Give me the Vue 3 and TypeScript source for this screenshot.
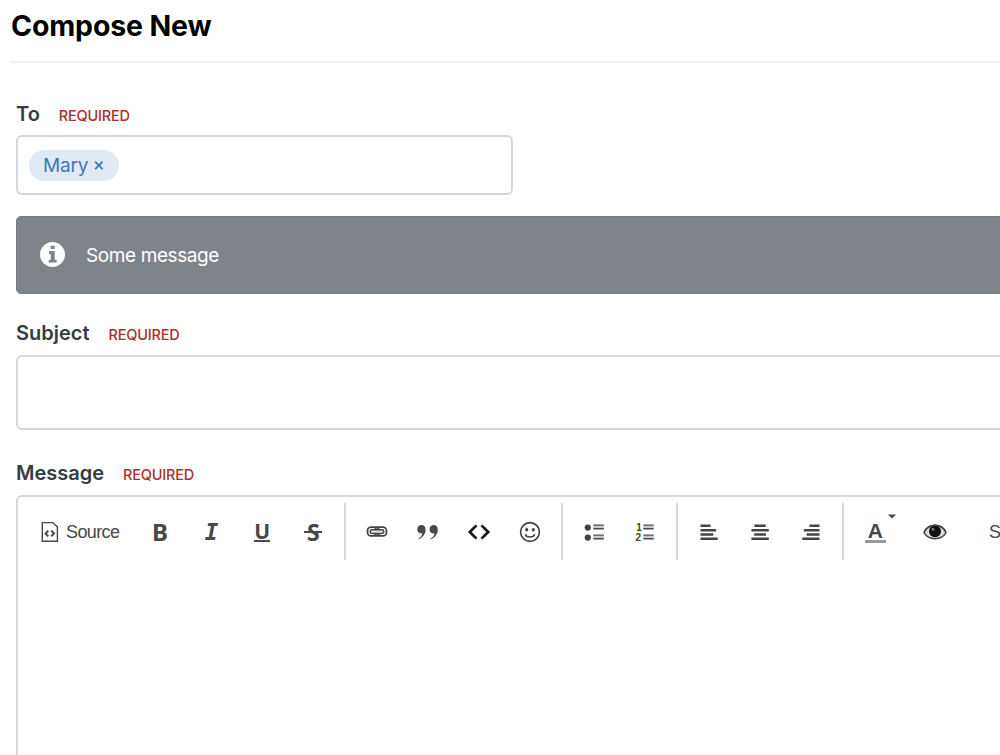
<script setup lang="ts">
interface Tool {
  id: string
  label: string
  glyph?: string
}

const groups: Tool[][] = [
  [
    { id: 'bold', label: 'Bold', glyph: 'B' },
    { id: 'italic', label: 'Italic', glyph: 'I' },
    { id: 'underline', label: 'Underline', glyph: 'U' },
    { id: 'strike', label: 'Strikethrough', glyph: 'S' },
  ],
  [
    { id: 'link', label: 'Link' },
    { id: 'quote', label: 'Block quote' },
    { id: 'code', label: 'Code' },
    { id: 'emoji', label: 'Emoji' },
  ],
  [
    { id: 'bullets', label: 'Bulleted list' },
    { id: 'numbers', label: 'Numbered list' },
  ],
  [
    { id: 'left', label: 'Align left' },
    { id: 'center', label: 'Align center' },
    { id: 'right', label: 'Align right' },
  ],
  [
    { id: 'color', label: 'Text color', glyph: 'A' },
    { id: 'preview', label: 'Preview' },
  ],
]
</script>

<template>
  <main class="page">
    <header class="head"><h1>Compose New</h1></header>
    <form class="form" @submit.prevent>
      <div class="label"><span class="name">To</span><span class="required">REQUIRED</span></div>
      <div class="recipients">
        <span class="chip">Mary
          <svg width="10" height="10" viewBox="0 0 10 10"><path d="M1.2 1.7 8.6 9.1M8.6 1.7 1.2 9.1" stroke="#3a78bd" stroke-width="1.8" /></svg>
        </span>
      </div>

      <div class="notice">
        <svg width="26" height="26" viewBox="0 0 26 26">
          <circle cx="12.5" cy="12.5" r="12.5" fill="#fff" />
          <path d="M10.7 3.7h4V7h-4zM9 9h5.7v8.7h1.9v2.9H8.7v-2.9h2v-5.6H9z" fill="#7f848a" />
        </svg>
        <span>Some message</span>
      </div>

      <div class="label subject-label"><span class="name">Subject</span><span class="required">REQUIRED</span></div>
      <div class="subject"></div>

      <div class="label message-label"><span class="name">Message</span><span class="required">REQUIRED</span></div>
      <div class="editor">
        <div class="toolbar">
          <div class="source">
            <svg width="18" height="22" viewBox="0 0 18 22" fill="none" stroke="#484848">
              <path d="M1.3 1.6h10.4l4.7 4.3v14.4H1.3z" stroke-width="1.4" />
              <path d="M7.3 9.6 4.6 12.5l2.7 2.9M10.3 9.6l2.7 2.9-2.7 2.9" stroke-width="2" />
            </svg>
            <span>Source</span>
          </div>
          <div v-for="(group, i) in groups" :key="i" class="group">
            <div v-for="tool in group" :key="tool.id" class="tool" :class="tool.id" :aria-label="tool.label">
              <span v-if="tool.glyph" class="glyph">{{ tool.glyph }}</span>
              <svg v-if="tool.id === 'color'" class="caret" width="8" height="5" viewBox="0 0 8 5"><path d="M0 .5h8L4 4.5z" fill="#484848" /></svg>
              <svg v-else-if="tool.id === 'link'" width="22" height="24" viewBox="0 0 22 24" fill="none">
                <rect x="1.5" y="7.1" width="11.7" height="8.8" rx="3.7" stroke="#444" stroke-width="1.8" />
                <rect x="8.8" y="7.1" width="11.7" height="8.8" rx="3.7" stroke="#444" stroke-width="1.8" />
                <rect x="4.2" y="9.7" width="13.6" height="3.7" rx="1.7" fill="#ddd" stroke="#444" stroke-width="1.5" />
              </svg>
              <svg v-else-if="tool.id === 'quote'" width="24" height="24" viewBox="0 0 24 24" fill="#484848">
                <path d="M5.5 5C8 5 9.6 6.7 9.6 9.5c0 4.7-3 8.3-7.1 9.8l-.3-.5c2.4-1.3 3.8-3 4.1-5.5-3 .7-5-1.2-5-4C1.3 6.8 3.1 5 5.5 5zM17.7 5c2.5 0 4.1 1.7 4.1 4.5 0 4.7-3 8.3-7.1 9.8l-.3-.5c2.4-1.3 3.8-3 4.1-5.5-3 .7-5-1.2-5-4 0-2.5 1.8-4.3 4.2-4.3z" />
              </svg>
              <svg v-else-if="tool.id === 'code'" width="24" height="24" viewBox="0 0 24 24" fill="none" stroke="#181818" stroke-width="2.7">
                <path d="M9.5 5.4 2.8 12l6.7 6.6M14.5 5.4l6.7 6.6-6.7 6.6" />
              </svg>
              <svg v-else-if="tool.id === 'emoji'" width="24" height="24" viewBox="0 0 24 24" fill="none" stroke="#404040">
                <circle cx="12" cy="12" r="9.4" stroke-width="1.6" />
                <path d="M7.2 14.2c1.4 3.7 8.2 3.7 9.6 0" stroke-width="1.6" />
                <ellipse cx="8.7" cy="9.7" rx="1.6" ry="1.8" fill="#404040" stroke="none" />
                <ellipse cx="15.3" cy="9.7" rx="1.6" ry="1.8" fill="#404040" stroke="none" />
              </svg>
              <svg v-else-if="tool.id === 'bullets'" width="24" height="24" viewBox="0 0 24 24">
                <circle cx="5.8" cy="7.6" r="3.1" fill="#404040" /><circle cx="5.8" cy="17.6" r="3.1" fill="#404040" />
                <path d="M11.4 6.9h10.4M11.4 16.9h10.4" stroke="#c9c9c9" stroke-width="2.6" />
                <path d="M11.4 5.1h10.4M11.4 8.7h10.4M11.4 15.1h10.4M11.4 18.7h10.4" stroke="#4b4b4b" stroke-width="1.4" />
              </svg>
              <svg v-else-if="tool.id === 'numbers'" width="24" height="24" viewBox="0 0 24 24">
                <text x="3.2" y="11.4" class="digit">1</text><text x="2.5" y="21.4" class="digit">2</text>
                <path d="M10.3 6.9h10.4M10.3 16.9h10.4" stroke="#c9c9c9" stroke-width="2.6" />
                <path d="M10.3 5.1h10.4M10.3 8.7h10.4M10.3 15.1h10.4M10.3 18.7h10.4" stroke="#4b4b4b" stroke-width="1.4" />
              </svg>
              <svg v-else-if="tool.id === 'left'" width="24" height="24" viewBox="0 0 24 24"><path d="M3.5 5.8h10M3.5 10.2h15.6M3.5 14.5h12.8M3.5 18.8h17.2" stroke="#444" stroke-width="2.6" /></svg>
              <svg v-else-if="tool.id === 'center'" width="24" height="24" viewBox="0 0 24 24"><path d="M6.4 5.8h11.2M3.4 10.2h17.4M6.2 14.5h11.8M3.4 18.8h17.4" stroke="#444" stroke-width="2.6" /></svg>
              <svg v-else-if="tool.id === 'right'" width="24" height="24" viewBox="0 0 24 24"><path d="M10.5 5.8h10M4.9 10.2h15.6M7.7 14.5h12.8M3.3 18.8h17.2" stroke="#444" stroke-width="2.6" /></svg>
              <svg v-else-if="tool.id === 'preview'" width="24" height="24" viewBox="0 0 24 24">
                <path d="M1 12.7C5.5 2.8 18.5 2.8 23 12.7 18.5 20.7 5.5 20.7 1 12.7z" fill="#ddd" stroke="#444" stroke-width="1.4" />
                <circle cx="12" cy="11.2" r="6" fill="#111" /><circle cx="10" cy="9.3" r="1.5" fill="#777" />
                <path d="M1.2 12C5.5 3 18.5 3 22.8 12" fill="none" stroke="#444" stroke-width="1.6" />
              </svg>
            </div>
          </div>
          <span class="styles">S</span>
        </div>
      </div>
    </form>
  </main>
</template>

<style>
body { margin: 0; background: #fff; overflow: hidden; }
</style>

<style scoped>
.page { width: 1000px; height: 755px; overflow: hidden; box-sizing: border-box; padding-left: 10px; font-family: Inter, "Liberation Sans", sans-serif; color: #363c43; background: #fff; }
.head { height: 61px; border-bottom: 2px solid #eff3f5; }
h1 { margin: 0; padding: 8px 0 0 1px; font-size: 28.5px; line-height: 36px; font-weight: 700; letter-spacing: -.15px; color: #000; white-space: nowrap; }
.form { padding: 38px 0 0 6px; }
.label { height: 34px; display: flex; align-items: baseline; line-height: 26px; }
.name { font-size: 20px; font-weight: 600; }
.required { margin-left: 19px; font-size: 14.5px; font-weight: 500; letter-spacing: -.2px; color: #a8322d; }
.recipients { box-sizing: border-box; width: 497px; height: 60px; border: 2px solid #d3d8de; border-radius: 6px; display: flex; align-items: center; padding-left: 11px; }
.chip { box-sizing: border-box; width: 90px; height: 31px; border-radius: 16px; background: #e0eaf5; color: #3a78bd; font-size: 19px; letter-spacing: -.2px; display: flex; align-items: center; padding-left: 14px; gap: 6px; }
.notice { box-sizing: border-box; height: 78px; margin-top: 21px; width: 1010px; border: 1px solid #747b82; border-radius: 5px; background: #7f848a; color: #fff; display: flex; align-items: center; padding: 0 0 0 23px; gap: 20px; font-size: 19px; letter-spacing: -.4px; }
.notice svg { margin-top: -1px; }
.subject-label { margin-top: 26px; }
.subject { box-sizing: border-box; width: 1010px; height: 75px; margin-top: 1px; border: 2px solid #d3d8de; border-radius: 6px; }
.message-label { margin-top: 30px; }
.editor { box-sizing: border-box; width: 1100px; height: 300px; margin-top: 1px; border: 2px solid #d3d8de; border-radius: 6px; }
.toolbar { height: 57px; margin-top: 6px; display: flex; align-items: stretch; color: #484848; }
.source { width: 116.5px; box-sizing: border-box; padding-left: 22.5px; display: flex; align-items: center; gap: 7.5px; font: 18px "Liberation Sans", Arial, sans-serif; letter-spacing: -.6px; }
.source span { margin-top: 2px; }
.group { display: flex; flex: none; }
.group + .group { padding-left: 5.5px; margin-left: 5px; border-left: 2px solid #d3d8de; }
.group:nth-child(n + 5) { margin-left: 5.6px; }
.tool { width: 51.1px; flex: none; display: flex; align-items: center; justify-content: center; position: relative; }
.glyph { font: bold 23px/24px "Noto Sans", sans-serif; color: #484848; }
.bold .glyph { font-size: 24px; }
.italic .glyph { font: italic bold 22.5px/24px "DejaVu Sans Mono", monospace; padding: 1px 0 0 1px; }
.underline .glyph { font: bold 21px/18px "Noto Sans", sans-serif; border-bottom: 2px solid #484848; }
.strike .glyph { padding: 0 2.5px; background: linear-gradient(#484848, #484848) 0 11px / 100% 2px no-repeat; }
.color { width: 60px; justify-content: flex-start; }
.color .glyph { margin-left: 15px; width: 21px; text-align: center; font: bold 21px/19px "Liberation Sans", sans-serif; border-bottom: 3px solid #999; }
.caret { position: absolute; left: 38px; top: 11px; }
.digit { font: bold 10px "Liberation Sans", sans-serif; fill: #404040; }
.styles { margin: 2px 0 0 28px; align-self: center; font: 18px "Liberation Sans", sans-serif; }
</style>
